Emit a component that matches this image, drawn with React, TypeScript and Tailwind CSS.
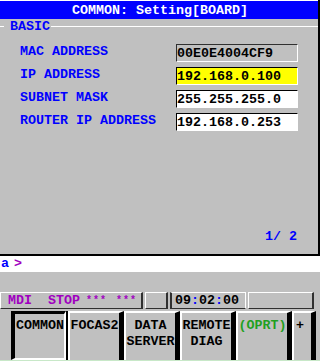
import React from 'react';

const rows = [
  { label: 'MAC ADDRESS', value: '00E0E4004CF9', box: 'bg-[#c0c0c0] border-t-[#303030] border-l-[#303030] border-b-white border-r-white' },
  { label: 'IP ADDRESS', value: '192.168.0.100', box: 'bg-[#ffff00] border-t-black border-l-black border-b-white border-r-white' },
  { label: 'SUBNET MASK', value: '255.255.255.0', box: 'bg-white border-t-black border-l-black border-b-white border-r-white' },
  { label: 'ROUTER IP ADDRESS', value: '192.168.0.253', box: 'bg-white border-t-black border-l-black border-b-white border-r-white' },
];

function SoftKey({ lines, color = 'text-black', pressed = false, width = 'w-[56px]', align = 'items-center' }: { lines: string[]; color?: string; pressed?: boolean; width?: string; align?: string }) {
  if (pressed) {
    return (
      <div className="flex h-full">
        <div className={`flex flex-col ${align} h-full w-[55px] border-l-4 border-t-[3px] border-r-2 border-b-2 border-l-black border-t-black border-r-white border-b-white pt-[4px] pl-[1px]`}>
          {lines.map((l) => (
            <span key={l} className={`${color} leading-[16px]`}>{l}</span>
          ))}
        </div>
        <div className="w-[2px] h-full bg-black" />
      </div>
    );
  }
  return (
    <div className={`flex flex-col ${align} h-full ${width} border-l-2 border-t-2 border-r-[5px] border-l-white border-t-white border-r-black pt-[5px]`}>
      {lines.map((l) => (
        <span key={l} className={`${color} leading-[16px] whitespace-pre`}>{l}</span>
      ))}
    </div>
  );
}

export default function App() {
  return (
    <div className="w-[320px] h-[361px] overflow-hidden bg-[#c0c0c0] flex flex-col font-['Liberation_Mono','DejaVu_Sans_Mono',monospace] text-[13.33px] font-bold leading-none">
      {/* Main panel */}
      <div className="h-[256px] flex flex-col border-r-2 border-b-2 border-black">
        <div className="h-px bg-white" />
        <div className="h-[18px] bg-[#0000ff] flex items-center justify-center text-white pt-[1px] pl-[2px]">
          COMMON: Setting[BOARD]
        </div>

        {/* BASIC group line */}
        <div className="h-[14px] flex items-center">
          <div className="w-[4px] h-px bg-white" />
          <span className="ml-[6px] text-[#0000ff] pt-[2px]">BASIC</span>
          <div className="flex-1 h-px bg-white ml-[1px]" />
        </div>

        <div className="flex flex-col gap-[5px] pt-[11px] pl-[20px] pr-[20px]">
          {rows.map((r) => (
            <div key={r.label} className="flex h-[18px] items-center">
              <span className="w-[156px] text-[#0000ff] pb-[3px]">{r.label}</span>
              <div className={`w-[122px] h-[18px] border flex items-center ${r.box}`}>
                <span className="text-black pt-[1px]">{r.value}</span>
              </div>
            </div>
          ))}
        </div>

        <div className="flex-1 flex items-end justify-end pr-[21px] pb-[11px]">
          <span className="text-[#0000ff] whitespace-pre">1/ 2</span>
        </div>
      </div>

      {/* Key-in line */}
      <div className="h-[16px] bg-white flex items-center pl-[1px]">
        <span className="text-[#0000ff]">a</span>
        <span className="text-[#a000c0] ml-[5px]">&gt;</span>
      </div>

      <div className="h-[20px]" />

      {/* Status row */}
      <div className="h-[17px] flex gap-[2px]">
        <div className="w-[143px] h-full border-t border-l border-r-2 border-b border-t-white border-l-white border-r-[#303030] border-b-[#303030] flex items-center pl-[7px] text-[#a000c0]">
          <span>MDI</span>
          <span className="ml-[16px]">STOP</span>
          <span className="ml-[6px] text-[10px] tracking-[1px]">***</span>
          <span className="ml-[9px] text-[10px] tracking-[1px]">***</span>
        </div>
        <div className="w-[23px] h-full border-t border-l border-r-2 border-b border-t-white border-l-white border-r-[#303030] border-b-[#303030]" />
        <div className="w-[76px] h-full border-t border-l-2 border-r border-b border-t-white border-l-[#303030] border-r-white border-b-[#303030] flex items-center pl-[3px]">
          <span className="text-black">09</span>
          <span className="text-[#0000ff]">:</span>
          <span className="text-black">02</span>
          <span className="text-[#0000ff]">:</span>
          <span className="text-black">00</span>
        </div>
        <div className="w-[66px] h-full border-t border-l border-r-2 border-b border-t-white border-l-white border-r-[#303030] border-b-[#303030]" />
      </div>

      <div className="h-[2px]" />

      {/* Soft keys */}
      <div className="h-[49px] flex pl-[11px]">
        <SoftKey lines={['COMMON']} pressed align="items-start" />
        <SoftKey lines={['FOCAS2']} />
        <SoftKey lines={['DATA', 'SERVER']} />
        <SoftKey lines={['REMOTE', 'DIAG']} />
        <SoftKey lines={['(OPRT)']} color="text-[#20a020]" />
        <SoftKey lines={['+']} width="w-[24px]" align="items-start pl-[2px]" />
      </div>
      <div className="h-px bg-[#c8e8c8]" />
    </div>
  );
}
